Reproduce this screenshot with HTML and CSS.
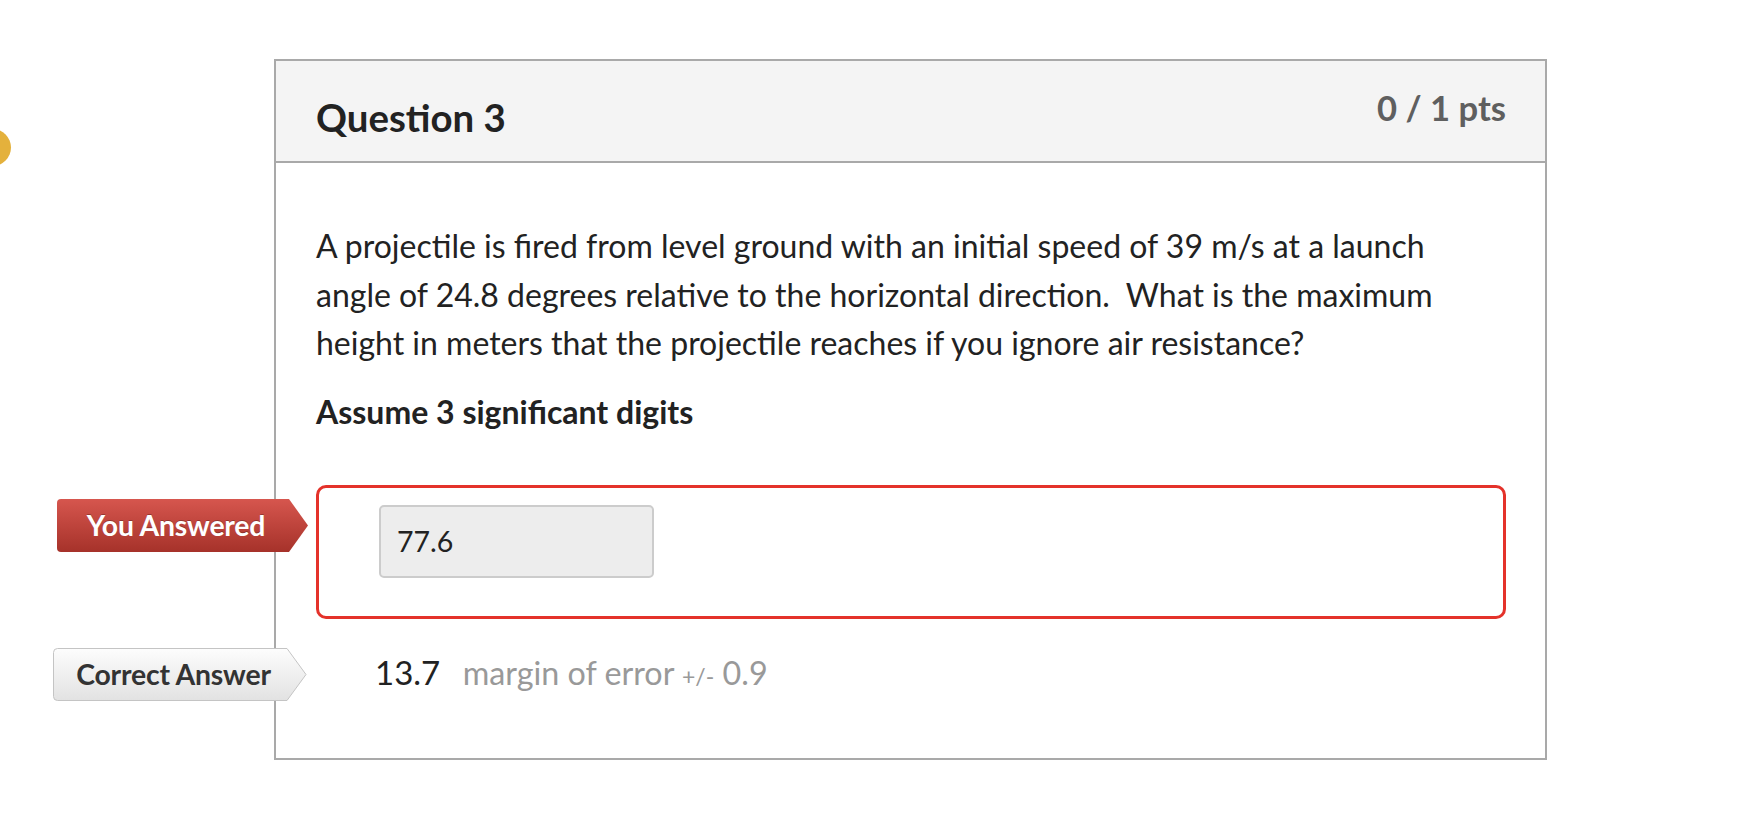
FILE: index.html
```html
<!DOCTYPE html>
<html lang="en">
<head>
<meta charset="utf-8">
<title>Question 3</title>
<link rel="stylesheet" href="styles.css">
</head>
<body>
<div class="dot"></div>
<main class="page">
  <section class="card">
    <header class="card-head">
      <h2 class="title">Question 3</h2>
      <div class="pts">0 / 1 pts</div>
    </header>
    <div class="card-body">
      <p class="question">A projectile is fired from level ground with an initial speed of 39 m/s at a launch angle of 24.8 degrees relative to the horizontal direction.&nbsp; What is the maximum height in meters that the projectile reaches if you ignore air resistance?</p>
      <p class="note">Assume 3 significant digits</p>

      <div class="answer-row">
        <div class="tag tag-wrong">
          <svg class="tag-shape" viewBox="0 0 251 53" preserveAspectRatio="none">
            <defs>
              <linearGradient id="gr" x1="0" y1="0" x2="0" y2="1">
                <stop offset="0" stop-color="#d6564e"/>
                <stop offset="1" stop-color="#a6322a"/>
              </linearGradient>
            </defs>
            <path d="M4 0 H232 L251 26.5 L232 53 H4 Q0 53 0 49 V4 Q0 0 4 0 Z" fill="url(#gr)"/>
          </svg>
          <span class="tag-text">You Answered</span>
        </div>
        <div class="answer-box">
          <div class="answer-input">77.6</div>
        </div>
      </div>

      <div class="answer-row correct-row">
        <div class="tag tag-correct">
          <svg class="tag-shape" viewBox="0 0 254 53" preserveAspectRatio="none">
            <defs>
              <linearGradient id="gg" x1="0" y1="0" x2="0" y2="1">
                <stop offset="0" stop-color="#fdfdfd"/>
                <stop offset="1" stop-color="#e2e2e2"/>
              </linearGradient>
            </defs>
            <path d="M4.5 0.5 H234 L253 26.5 L234 52.5 H4.5 Q0.5 52.5 0.5 48.5 V4.5 Q0.5 0.5 4.5 0.5 Z" fill="url(#gg)" stroke="#c4c4c4" stroke-width="1"/>
          </svg>
          <span class="tag-text">Correct Answer</span>
        </div>
        <div class="correct-answer">
          <span class="value">13.7</span>
          <span class="margin">margin of error <span class="pm">+/-</span> 0.9</span>
        </div>
      </div>
    </div>
  </section>
</main>
</body>
</html>
```

FILE: styles.css
```css
* {
  box-sizing: border-box;
}

html, body {
  margin: 0;
  padding: 0;
  background: #ffffff;
}

body {
  font-family: Lato, "Open Sans", "Liberation Sans", sans-serif;
  color: #2d2d2d;
  overflow: hidden;
}

.dot {
  position: absolute;
  left: -26px;
  top: 129px;
  width: 37px;
  height: 37px;
  border-radius: 50%;
  background: #e4b13c;
}

.page {
  padding: 59px 0 0 274px;
}

.card {
  width: 1273px;
  border: 2px solid #a9a9a9;
  background: #ffffff;
}

.card-head {
  display: flex;
  justify-content: space-between;
  align-items: flex-start;
  height: 102px;
  padding: 23px 39px 0 40px;
  background: #f4f4f4;
  border-bottom: 2px solid #a9a9a9;
}

.title {
  margin: 9px 0 0;
  font-size: 38.4px;
  line-height: 48px;
  font-weight: 700;
  color: #222222;
}

.pts {
  font-size: 34.6px;
  line-height: 48px;
  font-weight: 700;
  color: #5f5f5f;
}

.card-body {
  padding: 59px 39px 57px 40px;
}

.question {
  max-width: 1150px;
  margin: 0;
  font-size: 32px;
  line-height: 48.5px;
  color: #222222;
}

.note {
  margin: 20px 0 0;
  font-size: 32px;
  line-height: 48px;
  font-weight: 700;
  color: #222222;
}

.answer-row {
  display: flex;
  align-items: flex-start;
  gap: 8px;
  margin-top: 49px;
  margin-left: -259px;
}

.correct-row {
  margin-top: 29px;
  margin-left: -263px;
  gap: 9px;
  align-items: center;
}

.tag {
  display: grid;
  flex: none;
  width: 251px;
  height: 53px;
}

.tag-correct {
  width: 254px;
}

.tag > * {
  grid-area: 1 / 1;
}

.tag-shape {
  width: 100%;
  height: 100%;
  display: block;
}

.tag-text {
  align-self: center;
  justify-self: center;
  margin-right: 13px;
  font-size: 28.4px;
  font-weight: 700;
  line-height: 1;
  letter-spacing: -0.2px;
}

.tag-wrong {
  margin-top: 14px;
}

.tag-wrong .tag-text {
  color: #ffffff;
  text-shadow: 0 -1px 0 rgba(0, 0, 0, 0.25);
}

.tag-correct .tag-text {
  color: #333333;
}

.answer-box {
  flex: 1;
  height: 134px;
  padding: 17px 0 0 60px;
  border: 3px solid #e4322a;
  border-radius: 10px;
}

.answer-input {
  width: 275px;
  height: 73px;
  padding-left: 16px;
  display: flex;
  align-items: center;
  font-size: 28.5px;
  color: #222222;
  background: #ededed;
  border: 2px solid #cccccc;
  border-radius: 5px;
}

.correct-answer {
  padding-left: 59px;
  font-size: 33px;
  line-height: 48px;
  color: #222222;
}

.margin {
  margin-left: 14px;
  font-size: 32.3px;
  color: #999999;
}

.pm {
  font-size: 23px;
}
```
